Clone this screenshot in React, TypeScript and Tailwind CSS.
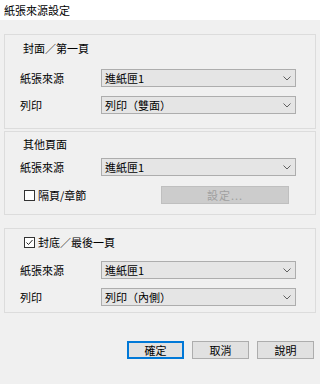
import React from 'react';

const font = { fontFamily: '"Noto Sans CJK TC", "Noto Sans CJK JP", sans-serif' };

function Chevron() {
  return (
    <svg width="8" height="5" viewBox="0 0 8 5" className="text-[#606060]">
      <path d="M0.5 0.5 L4 4 L7.5 0.5" fill="none" stroke="currentColor" strokeWidth="1" />
    </svg>
  );
}

function Select({ value }: { value: string }) {
  return (
    <div className="w-[195px] h-[18px] bg-[#e5e5e5] border border-[#adadad] flex items-center justify-between pl-[3px] pr-[4px]">
      <span className="text-[11px] leading-none text-black">{value}</span>
      <Chevron />
    </div>
  );
}

function Row({ label, value }: { label: string; value: string }) {
  return (
    <div className="flex items-center">
      <span className="w-[96px] pl-[15px] text-[11px] leading-none text-black">{label}</span>
      <Select value={value} />
    </div>
  );
}

function Checkbox({ checked }: { checked?: boolean }) {
  return (
    <div className="w-[11px] h-[11px] border border-[#333] bg-white flex items-center justify-center">
      {checked && (
        <svg width="9" height="9" viewBox="0 0 9 9">
          <path d="M1.5 4.5 L3.5 6.5 L7.5 2" fill="none" stroke="#222" strokeWidth="1" />
        </svg>
      )}
    </div>
  );
}

export default function App() {
  return (
    <div className="w-[320px] h-[384px] bg-[#f0f0f0] flex flex-col" style={font}>
      <div className="h-[20px] bg-white flex items-center pl-[4px] text-[11px] text-black">紙張來源設定</div>

      <div className="mx-[4px] mt-[14px] border border-[#dcdcdc] pt-[6px] pb-[14px] flex flex-col">
        <div className="h-[14px] pl-[18px] flex items-center text-[11px]">封面／第一頁</div>
        <div className="mt-[14px] flex flex-col gap-[9px]">
          <Row label="紙張來源" value="進紙匣1" />
          <Row label="列印" value="列印（雙面）" />
        </div>
      </div>

      <div className="mx-[4px] mt-[2px] border border-[#dcdcdc] pt-[5px] pb-[10px] flex flex-col">
        <div className="h-[14px] pl-[18px] flex items-center text-[11px]">其他頁面</div>
        <div className="mt-[7px]">
          <Row label="紙張來源" value="進紙匣1" />
        </div>
        <div className="mt-[10px] flex items-center">
          <div className="w-[156px] pl-[19px] flex items-center gap-[3px]">
            <Checkbox />
            <span className="text-[11px] leading-none">隔頁/章節</span>
          </div>
          <div className="w-[128px] h-[18px] bg-[#cccccc] border border-[#bfbfbf] flex items-center justify-center text-[11px] text-[#a0a0a0] tracking-[1px]">
            設定...
          </div>
        </div>
      </div>

      <div className="mx-[4px] mt-[13px] border border-[#dcdcdc] pt-[6px] pb-[6px] flex flex-col">
        <div className="h-[14px] pl-[19px] flex items-center gap-[3px] text-[11px]">
          <Checkbox checked />
          <span>封底／最後一頁</span>
        </div>
        <div className="mt-[12px] flex flex-col gap-[9px]">
          <Row label="紙張來源" value="進紙匣1" />
          <Row label="列印" value="列印（內側）" />
        </div>
      </div>

      <div className="mt-[28px] flex justify-end gap-[8px] pr-[6px]">
        <div className="w-[57px] h-[18px] bg-[#e1e1e1] border-2 border-[#0078d7] flex items-center justify-center text-[11px]">確定</div>
        <div className="w-[57px] h-[18px] bg-[#e1e1e1] border border-[#adadad] flex items-center justify-center text-[11px]">取消</div>
        <div className="w-[57px] h-[18px] bg-[#e1e1e1] border border-[#adadad] flex items-center justify-center text-[11px]">說明</div>
      </div>
    </div>
  );
}
